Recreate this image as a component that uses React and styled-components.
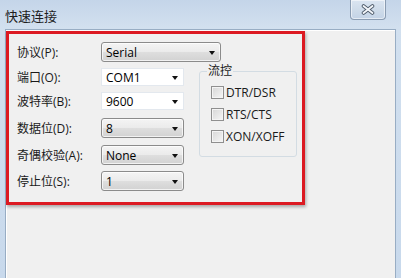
import React from "react";
import styled, { createGlobalStyle } from "styled-components";

const GlobalStyle = createGlobalStyle`
  html, body {
    margin: 0;
    padding: 0;
  }
  body {
    width: 401px;
    height: 278px;
    overflow: hidden;
    font-family: "Open Sans", "Noto Sans CJK SC", sans-serif;
    color: #1a1a1a;
  }
`;

const Window = styled.div`
  box-sizing: border-box;
  width: 401px;
  height: 278px;
  display: flex;
  flex-direction: column;
  padding: 0 5px;
  background: linear-gradient(to bottom, #c4d5e9 0px, #d2e0ef 28px, #c8d9ec 278px);
`;

const TitleBar = styled.div`
  height: 29px;
  flex: none;
  display: flex;
  align-items: center;
  justify-content: space-between;
`;

const Title = styled.span`
  font-family: "Noto Sans CJK SC", sans-serif;
  font-size: 13px;
  color: #1e1e1e;
  padding-left: 0;
  margin-top: 1px;
`;

const CloseButton = styled.div`
  align-self: flex-start;
  box-sizing: border-box;
  width: 36px;
  height: 20px;
  margin-right: 10px;
  display: flex;
  align-items: center;
  justify-content: center;
  border: 1px solid #8a9cb2;
  border-top: none;
  border-radius: 0 0 4px 4px;
  background: linear-gradient(to bottom, #dbe5f1, #cfdcea 50%, #c3d3e6);
  box-shadow: inset 0 0 0 1px rgba(255, 255, 255, 0.55);
`;

const Client = styled.div`
  flex: 1;
  background: #f0f0f0;
  border: 1px solid #98adc4;
  border-bottom: none;
  box-shadow: inset 1px 1px 0 #ffffff;
`;

const Highlight = styled.div`
  box-sizing: border-box;
  width: 299px;
  height: 174px;
  margin-top: 1px;
  border: 3px solid #dc1a22;
  box-shadow: 1px 2px 3px rgba(0, 0, 0, 0.3);
  padding: 8px 0 0 8px;
`;

const Row = styled.div`
  display: flex;
  align-items: center;
  height: 20px;
  margin-top: ${({ $mt }) => $mt || 0}px;
`;

const Label = styled.span`
  width: 84px;
  flex: none;
  font-size: 12px;
  white-space: nowrap;
`;

const Body = styled.div`
  display: flex;
  align-items: flex-start;
`;

const Column = styled.div`
  display: flex;
  flex-direction: column;
`;

const ComboBase = styled.div`
  box-sizing: border-box;
  width: ${({ $w }) => $w}px;
  display: flex;
  align-items: center;
  justify-content: space-between;
  padding: 0 5px 0 4px;
  font-size: 12px;
  color: #000;
`;

const ButtonCombo = styled(ComboBase)`
  height: 20px;
  border: 1px solid #8b8b8b;
  border-radius: 3px;
  background: linear-gradient(to bottom, #f4f4f4 0%, #ebebeb 48%, #dedede 52%, #d2d2d2 100%);
  box-shadow: inset 0 0 0 1px rgba(255, 255, 255, 0.7);
`;

const EditCombo = styled(ComboBase)`
  height: 18px;
  background: #ffffff;
  border: 1px solid #e3e8ee;
`;

const Arrow = styled.span`
  width: 0;
  height: 0;
  border-left: 3.5px solid transparent;
  border-right: 3.5px solid transparent;
  border-top: 4px solid #111;
  margin-top: 1px;
`;

const Group = styled.fieldset`
  box-sizing: border-box;
  width: 98px;
  margin: 2px 0 0 15px;
  padding: 3px 6px 9px 11px;
  border: 1px solid #d3dce3;
  border-radius: 3px;
`;

const Legend = styled.legend`
  font-size: 12px;
  line-height: 14px;
  padding: 0 1px;
  margin-left: -4px;
`;

const CheckRow = styled.div`
  display: flex;
  align-items: center;
  height: 22px;
  font-size: 12px;
  color: #1a1a1a;
`;

const Box = styled.span`
  box-sizing: border-box;
  width: 13px;
  height: 13px;
  margin-right: 2px;
  border: 1px solid #8f8f8f;
  background: linear-gradient(135deg, #d6d6d6, #f6f6f6);
  box-shadow: inset 0 0 0 1px #f4f4f4;
`;

const CloseIcon = () => (
  <svg width="14" height="11" viewBox="0 0 14 11">
    <path d="M2.5 2 L11.5 9 M11.5 2 L2.5 9" stroke="#4f5c6b" strokeWidth="3.6" strokeLinecap="round" />
    <path d="M2.5 2 L11.5 9 M11.5 2 L2.5 9" stroke="#f4f7fb" strokeWidth="1.8" strokeLinecap="round" />
  </svg>
);

const Combo = ({ editable, width = 83, children }) => {
  const Wrapper = editable ? EditCombo : ButtonCombo;
  return (
    <Wrapper $w={width}>
      <span>{children}</span>
      <Arrow />
    </Wrapper>
  );
};

const rows = [
  { label: "端口(O):", value: "COM1", editable: true, mt: 5 },
  { label: "波特率(B):", value: "9600", editable: true, mt: 4 },
  { label: "数据位(D):", value: "8", mt: 7 },
  { label: "奇偶校验(A):", value: "None", mt: 7 },
  { label: "停止位(S):", value: "1", mt: 6 },
];

const flows = ["DTR/DSR", "RTS/CTS", "XON/XOFF"];

export default function App() {
  return (
    <>
      <GlobalStyle />
      <Window>
        <TitleBar>
          <Title>快速连接</Title>
          <CloseButton>
            <CloseIcon />
          </CloseButton>
        </TitleBar>
        <Client>
          <Highlight>
            <Row>
              <Label>协议(P):</Label>
              <Combo width={120}>Serial</Combo>
            </Row>
            <Body>
              <Column>
                {rows.map((r) => (
                  <Row key={r.label} $mt={r.mt}>
                    <Label>{r.label}</Label>
                    <Combo editable={r.editable}>{r.value}</Combo>
                  </Row>
                ))}
              </Column>
              <Group>
                <Legend>流控</Legend>
                {flows.map((f) => (
                  <CheckRow key={f}>
                    <Box />
                    {f}
                  </CheckRow>
                ))}
              </Group>
            </Body>
          </Highlight>
        </Client>
      </Window>
    </>
  );
}
